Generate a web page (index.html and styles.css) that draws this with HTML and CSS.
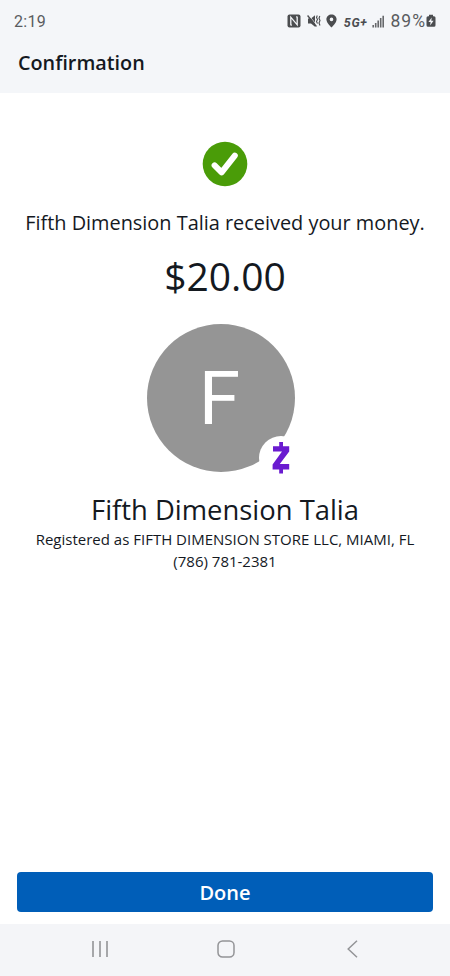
FILE: index.html
```html
<!DOCTYPE html>
<html lang="en">
<head>
    <meta charset="UTF-8">
    <meta name="viewport" content="width=device-width, initial-scale=1.0">
    <title>Confirmation</title>
    <link rel="stylesheet" href="styles.css">
</head>
<body>
    <header>
        <div class="status-bar">
            <span class="time">2:19</span>
            <div class="status-icons">
                <!-- NFC -->
                <svg class="nfc" width="14" height="14" viewBox="0 0 14 14">
                    <rect x="0.5" y="0.5" width="13" height="13" rx="2" fill="#4b4d50"/>
                    <path d="M4.8 11.3L3.8 10.8V3.2L10.2 10.8V3.2L9.2 2.7" fill="none" stroke="#f4f6f9" stroke-width="1.3"/>
                </svg>
                <!-- Muted, vibrate -->
                <svg class="mute" width="14" height="14" viewBox="0 0 14 14">
                    <path d="M1 4.5H4L8 1.2V12.8L4 9.5H1Z" fill="#4b4d50"/>
                    <path d="M1.4 0.8L10 11.5" stroke="#f4f6f9" stroke-width="0.8"/>
                    <path d="M0.6 1.5L9.4 12.5" stroke="#4b4d50" stroke-width="1.3"/>
                    <path d="M10.3 1.5L9.5 3.5L10.5 5.5L9.5 7.5L10.5 9.5M12.8 2L12 4.3L13 6.6L12 9L13 11.5" fill="none" stroke="#4b4d50" stroke-width="1.1"/>
                </svg>
                <!-- Location -->
                <svg class="pin" width="11" height="14" viewBox="0 0 11 14">
                    <path d="M5.5 0.6C2.7 0.6 0.4 2.7 0.4 5.4C0.4 8.8 5.5 13.4 5.5 13.4S10.6 8.8 10.6 5.4C10.6 2.7 8.3 0.6 5.5 0.6ZM5.5 3.6A1.8 1.8 0 1 1 5.5 7.2A1.8 1.8 0 1 1 5.5 3.6Z" fill="#4b4d50" fill-rule="evenodd"/>
                </svg>
                <span class="network">5G+</span>
                <!-- Signal -->
                <svg class="signal" width="13" height="13" viewBox="0 0 13 13">
                    <path d="M1.2 10V12.5M3.7 8V12.5M6.2 5.5V12.5M8.7 3V12.5M11.2 0.8V12.5" stroke="#66686b" stroke-width="1.6"/>
                </svg>
                <span class="percent">89%</span>
                <!-- Battery -->
                <svg class="battery" width="10" height="14" viewBox="0 0 10 14">
                    <path d="M3 0.8H7V2.2H8A1.5 1.5 0 0 1 9.5 3.7V11.3A1.5 1.5 0 0 1 8 12.8H2A1.5 1.5 0 0 1 0.5 11.3V3.7A1.5 1.5 0 0 1 2 2.2H3Z" fill="#4b4d50"/>
                    <path d="M5.7 3.4L2.4 8H4.6L4.1 11.4L7.6 6.7H5.3Z" fill="#f4f6f9"/>
                </svg>
            </div>
        </div>
        <h1>Confirmation</h1>
    </header>

    <main>
        <svg class="check" width="46" height="46" viewBox="0 0 46 46">
            <circle cx="23" cy="23" r="22.3" fill="#4a9c08"/>
            <path d="M12.6 24.4L19.6 31.4L32.8 14.7" fill="none" stroke="#fff" stroke-width="6" stroke-linecap="round" stroke-linejoin="round"/>
        </svg>
        <p class="message">Fifth Dimension Talia received your money.</p>
        <p class="amount">$20.00</p>
        <div class="avatar">
            F
            <div class="badge">
                <svg width="18" height="32" viewBox="0 0 18 32">
                    <path d="M7.2 0H11V4.2H17.2V9.6L7.8 22H17.2V27.4H11V31.6H7.2V27.4H0.6V22.4L10 9.6H1V4.2H7.2Z" fill="#6a1bd0"/>
                </svg>
            </div>
        </div>
        <h2>Fifth Dimension Talia</h2>
        <p class="registered">Registered as FIFTH DIMENSION STORE LLC, MIAMI, FL</p>
        <p class="phone">(786) 781-2381</p>
        <button type="button">Done</button>
    </main>

    <nav>
        <svg width="18" height="18" viewBox="0 0 18 18">
            <path d="M2 1V17M9 1V17M16 1V17" stroke="#939497" stroke-width="1.6"/>
        </svg>
        <svg width="18" height="18" viewBox="0 0 18 18">
            <rect x="1" y="1" width="16" height="16" rx="4.5" fill="none" stroke="#939497" stroke-width="1.5"/>
        </svg>
        <svg width="18" height="18" viewBox="0 0 18 18">
            <path d="M14 0.8L5.2 9L14 17.2" fill="none" stroke="#939497" stroke-width="1.5"/>
        </svg>
    </nav>
</body>
</html>
```
FILE: styles.css
```css
* {
    box-sizing: border-box;
}
body {
    font-family: "Open Sans", sans-serif;
    display: flex;
    flex-direction: column;
    height: 976px;
    background-color: #fff;
    color: #14191f;
    margin: 0;
}
h1, h2, p {
    margin: 0;
    font-weight: 400;
    white-space: nowrap;
}
svg {
    display: block;
    flex: none;
}
header {
    height: 93px;
    background-color: #f4f6f9;
}
.status-bar {
    display: flex;
    align-items: center;
    justify-content: space-between;
    height: 42px;
    padding: 0 14px 0 14px;
    font-family: Roboto, sans-serif;
    color: #5a5c5f;
}
.time {
    font-size: 16px;
    letter-spacing: 0.3px;
}
.status-icons {
    display: flex;
    align-items: center;
}
.mute {
    margin-left: 6px;
}
.pin {
    margin-left: 5px;
}
.network {
    margin: 3px 0 0 7px;
    font-size: 12.5px;
    font-weight: 700;
    font-style: italic;
    line-height: 14px;
    letter-spacing: 0.6px;
    color: #4b4d50;
}
.signal {
    margin-left: 4px;
}
.percent {
    margin-left: 6px;
    font-size: 17.5px;
    letter-spacing: 1px;
}
h1 {
    padding-left: 18px;
    font-size: 19.8px;
    font-weight: 600;
    line-height: 42px;
}
main {
    flex: 1;
    display: flex;
    flex-direction: column;
    align-items: center;
    padding: 48px 17px 12px;
}
.message {
    margin-top: 22px;
    font-size: 19.9px;
    line-height: 28px;
}
.amount {
    margin-top: 12px;
    font-size: 39px;
    line-height: 54px;
}
.avatar {
    position: relative;
    width: 148px;
    height: 148px;
    margin: 21px 8px 0 0;
    padding-right: 3px;
    border-radius: 50%;
    background-color: #959595;
    color: #fff;
    font-family: Roboto, sans-serif;
    font-size: 75px;
    line-height: 148px;
    text-align: center;
}
.badge {
    position: absolute;
    right: -8px;
    bottom: -8px;
    display: flex;
    align-items: center;
    justify-content: center;
    width: 44px;
    height: 44px;
    border-radius: 50%;
    background-color: #fff;
}
h2 {
    margin-top: 19px;
    font-size: 27.4px;
    line-height: 38px;
}
.registered,
.phone {
    font-size: 15px;
    line-height: 22px;
}
.registered {
    margin-top: -1px;
}
button {
    width: 100%;
    height: 40px;
    margin-top: auto;
    border: none;
    border-radius: 4px;
    background-color: #005eb8;
    color: #fff;
    font-family: inherit;
    font-size: 20px;
    font-weight: 600;
    cursor: pointer;
}
nav {
    display: flex;
    align-items: center;
    justify-content: space-between;
    height: 52px;
    padding: 0 89px 2px 91px;
    background-color: #f4f5f8;
}
```
